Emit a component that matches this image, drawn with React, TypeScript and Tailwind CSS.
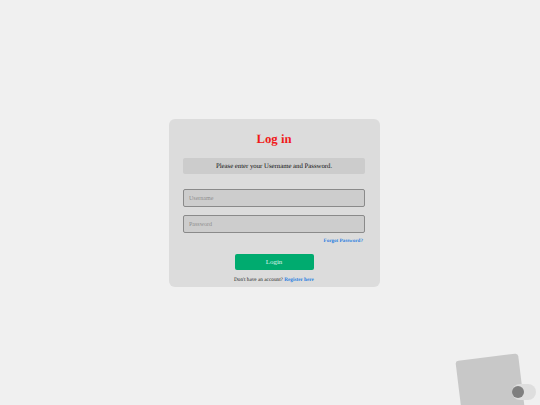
export default function App() {
  return (
    <div className="relative w-[540px] h-[405px] overflow-hidden bg-[#f0f0f0] pt-[119px] pl-[169px] font-['Liberation_Serif',serif] antialiased [text-rendering:geometricPrecision]">
      <div className="w-[211px] h-[168px] rounded-[6px] bg-[#dcdcdc] pl-[14px] pr-[15px] pt-[12px] flex flex-col opacity-[0.999]">
        <h1 className="text-[12.75px] leading-[16px] font-bold text-[#f01a1a] text-center">Log in</h1>
        <div className="mt-[11px] h-[16px] rounded-[2px] bg-[#cccccc] text-[6.75px] leading-[17px] text-center text-[#111111]">
          Please enter your Username and Password.
        </div>
        <input
          placeholder="Username"
          className="mt-[15px] h-[18px] w-full rounded-[2px] border border-[#8a8a8a] bg-[#cdcdcd] px-[5px] text-[6px] outline-none placeholder:text-[#8f8f8f]"
        />
        <input
          placeholder="Password"
          className="mt-[8px] h-[18px] w-full rounded-[2px] border border-[#8a8a8a] bg-[#cdcdcd] px-[5px] text-[6px] outline-none placeholder:text-[#8f8f8f]"
        />
        <a className="mt-[4px] pr-[2px] text-right text-[5.1px] leading-[8px] font-bold text-[#2a7fe0]">Forgot Password?</a>
        <button className="mt-[9px] self-center w-[79px] h-[16px] rounded-[2px] bg-[#00ab6f] text-[7px] text-[#dff3ea]">Login</button>
        <p className="mt-[7px] text-center text-[5.25px] leading-[7px] text-[#222222]">
          Don't have an account? <a className="font-bold text-[#2a7fe0]">Register here</a>
        </p>
      </div>
      <div className="absolute left-[459px] top-[357px] w-[63px] h-[63px] rounded-[3px] bg-[#c8c8c8] -rotate-[7deg]" />
      <div className="absolute left-[512px] top-[384px] w-[24px] h-[16px] rounded-full bg-[#dedede]" />
      <div className="absolute left-[512px] top-[386px] w-[12px] h-[12px] rounded-full bg-[#7f7f7f]" />
    </div>
  );
}
